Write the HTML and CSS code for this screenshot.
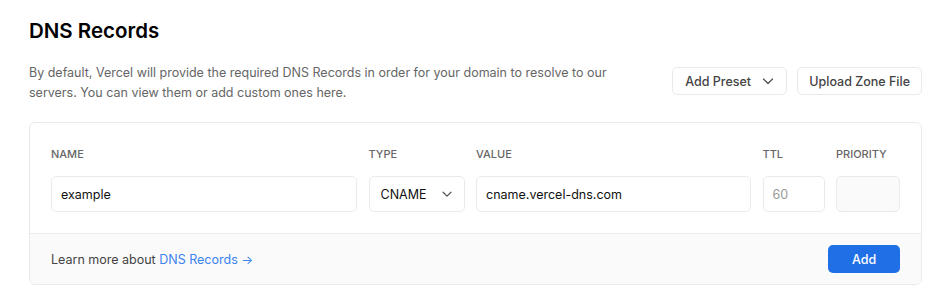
FILE: index.html
```html
<!DOCTYPE html>
<html lang="en">
<head>
<meta charset="utf-8">
<title>DNS Records</title>
<link rel="stylesheet" href="styles.css">
</head>
<body>
<section class="page">
  <h1 class="title">DNS Records</h1>
  <div class="intro">
    <p class="desc">By default, Vercel will provide the required DNS Records in order for your domain to resolve to our servers. You can view them or add custom ones here.</p>
    <div class="actions">
      <button class="btn btn-preset">Add Preset
        <svg class="chev" width="16" height="16" viewBox="0 0 16 16" fill="none" stroke="currentColor" stroke-width="1.3" stroke-linecap="round" stroke-linejoin="round"><path d="M3.5 6l4.5 4.5L12.5 6"/></svg>
      </button>
      <button class="btn">Upload Zone File</button>
    </div>
  </div>
  <div class="card">
    <div class="form">
      <div class="field">
        <label class="label">Name</label>
        <div class="input">example</div>
      </div>
      <div class="field">
        <label class="label">Type</label>
        <div class="input select">CNAME
          <svg class="chev" width="14" height="14" viewBox="0 0 16 16" fill="none" stroke="currentColor" stroke-width="1.4" stroke-linecap="round" stroke-linejoin="round"><path d="M3.5 6l4.5 4.5L12.5 6"/></svg>
        </div>
      </div>
      <div class="field">
        <label class="label">Value</label>
        <div class="input">cname.vercel-dns.com</div>
      </div>
      <div class="field">
        <label class="label">TTL</label>
        <div class="input placeholder">60</div>
      </div>
      <div class="field">
        <label class="label">Priority</label>
        <div class="input disabled"></div>
      </div>
    </div>
    <div class="footer">
      <p class="learn">Learn more about <a class="link" href="#">DNS Records →</a></p>
      <button class="btn-primary">Add</button>
    </div>
  </div>
</section>
</body>
</html>
```

FILE: styles.css
```css
* { box-sizing: border-box; }
html, body { margin: 0; padding: 0; background: #fff; }
body {
  font-family: Inter, "Noto Sans", sans-serif;
  color: #111;
  -webkit-font-smoothing: antialiased;
}
.page {
  padding: 17px 26px 0 29px;
}
.title {
  margin: 0;
  font-size: 20.5px;
  font-weight: 600;
  line-height: 28px;
  color: #000;
}
.intro {
  display: flex;
  justify-content: space-between;
  align-items: flex-start;
  margin-top: 18px;
}
.desc {
  margin: 0;
  width: 600px;
  font-size: 12.5px;
  line-height: 19.5px;
  color: #666;
}
.actions {
  display: flex;
  gap: 10px;
  margin-top: 4px;
}
.btn {
  display: inline-flex;
  align-items: center;
  height: 28px;
  padding: 0 11px;
  border: 1px solid #eaeaea;
  border-radius: 5px;
  background: #fff;
  font-family: inherit;
  font-size: 12.5px;
  font-weight: 500;
  color: #444;
}
.btn-preset { width: 115px; padding: 0 10px 0 12px; justify-content: space-between; }
.chev { color: #555; flex: none; }
.card {
  margin-top: 20px;
  border: 1px solid #eaeaea;
  border-radius: 6px;
  overflow: hidden;
}
.form {
  display: grid;
  grid-template-columns: 306px 96px 275px 62px 64px;
  column-gap: 11.5px;
  padding: 23px 21px 21px 21px;
}
.field { display: flex; flex-direction: column; }
.label {
  font-size: 11px;
  font-weight: 500;
  text-transform: uppercase;
  color: #666;
  line-height: 16px;
  margin-bottom: 14px;
}
.input {
  height: 36px;
  border: 1px solid #eaeaea;
  border-radius: 5px;
  padding: 0 9px;
  display: flex;
  align-items: center;
  font-size: 12.5px;
  color: #111;
  background: #fff;
}
.select { justify-content: space-between; padding: 0 10px 0 11px; }
.placeholder { color: #999; }
.disabled { background: #fafafa; }
.footer {
  display: flex;
  justify-content: space-between;
  align-items: center;
  border-top: 1px solid #eaeaea;
  background: #fafafa;
  height: 51px;
  padding: 0 21px;
}
.learn {
  margin: 0;
  font-size: 12.5px;
  color: #444;
}
.link { color: #3a83f0; text-decoration: none; }
.btn-primary {
  width: 72px;
  height: 28px;
  border: 0;
  border-radius: 5px;
  background: #1f6fe6;
  color: #fff;
  font-family: inherit;
  font-size: 12.5px;
  font-weight: 500;
}
```
